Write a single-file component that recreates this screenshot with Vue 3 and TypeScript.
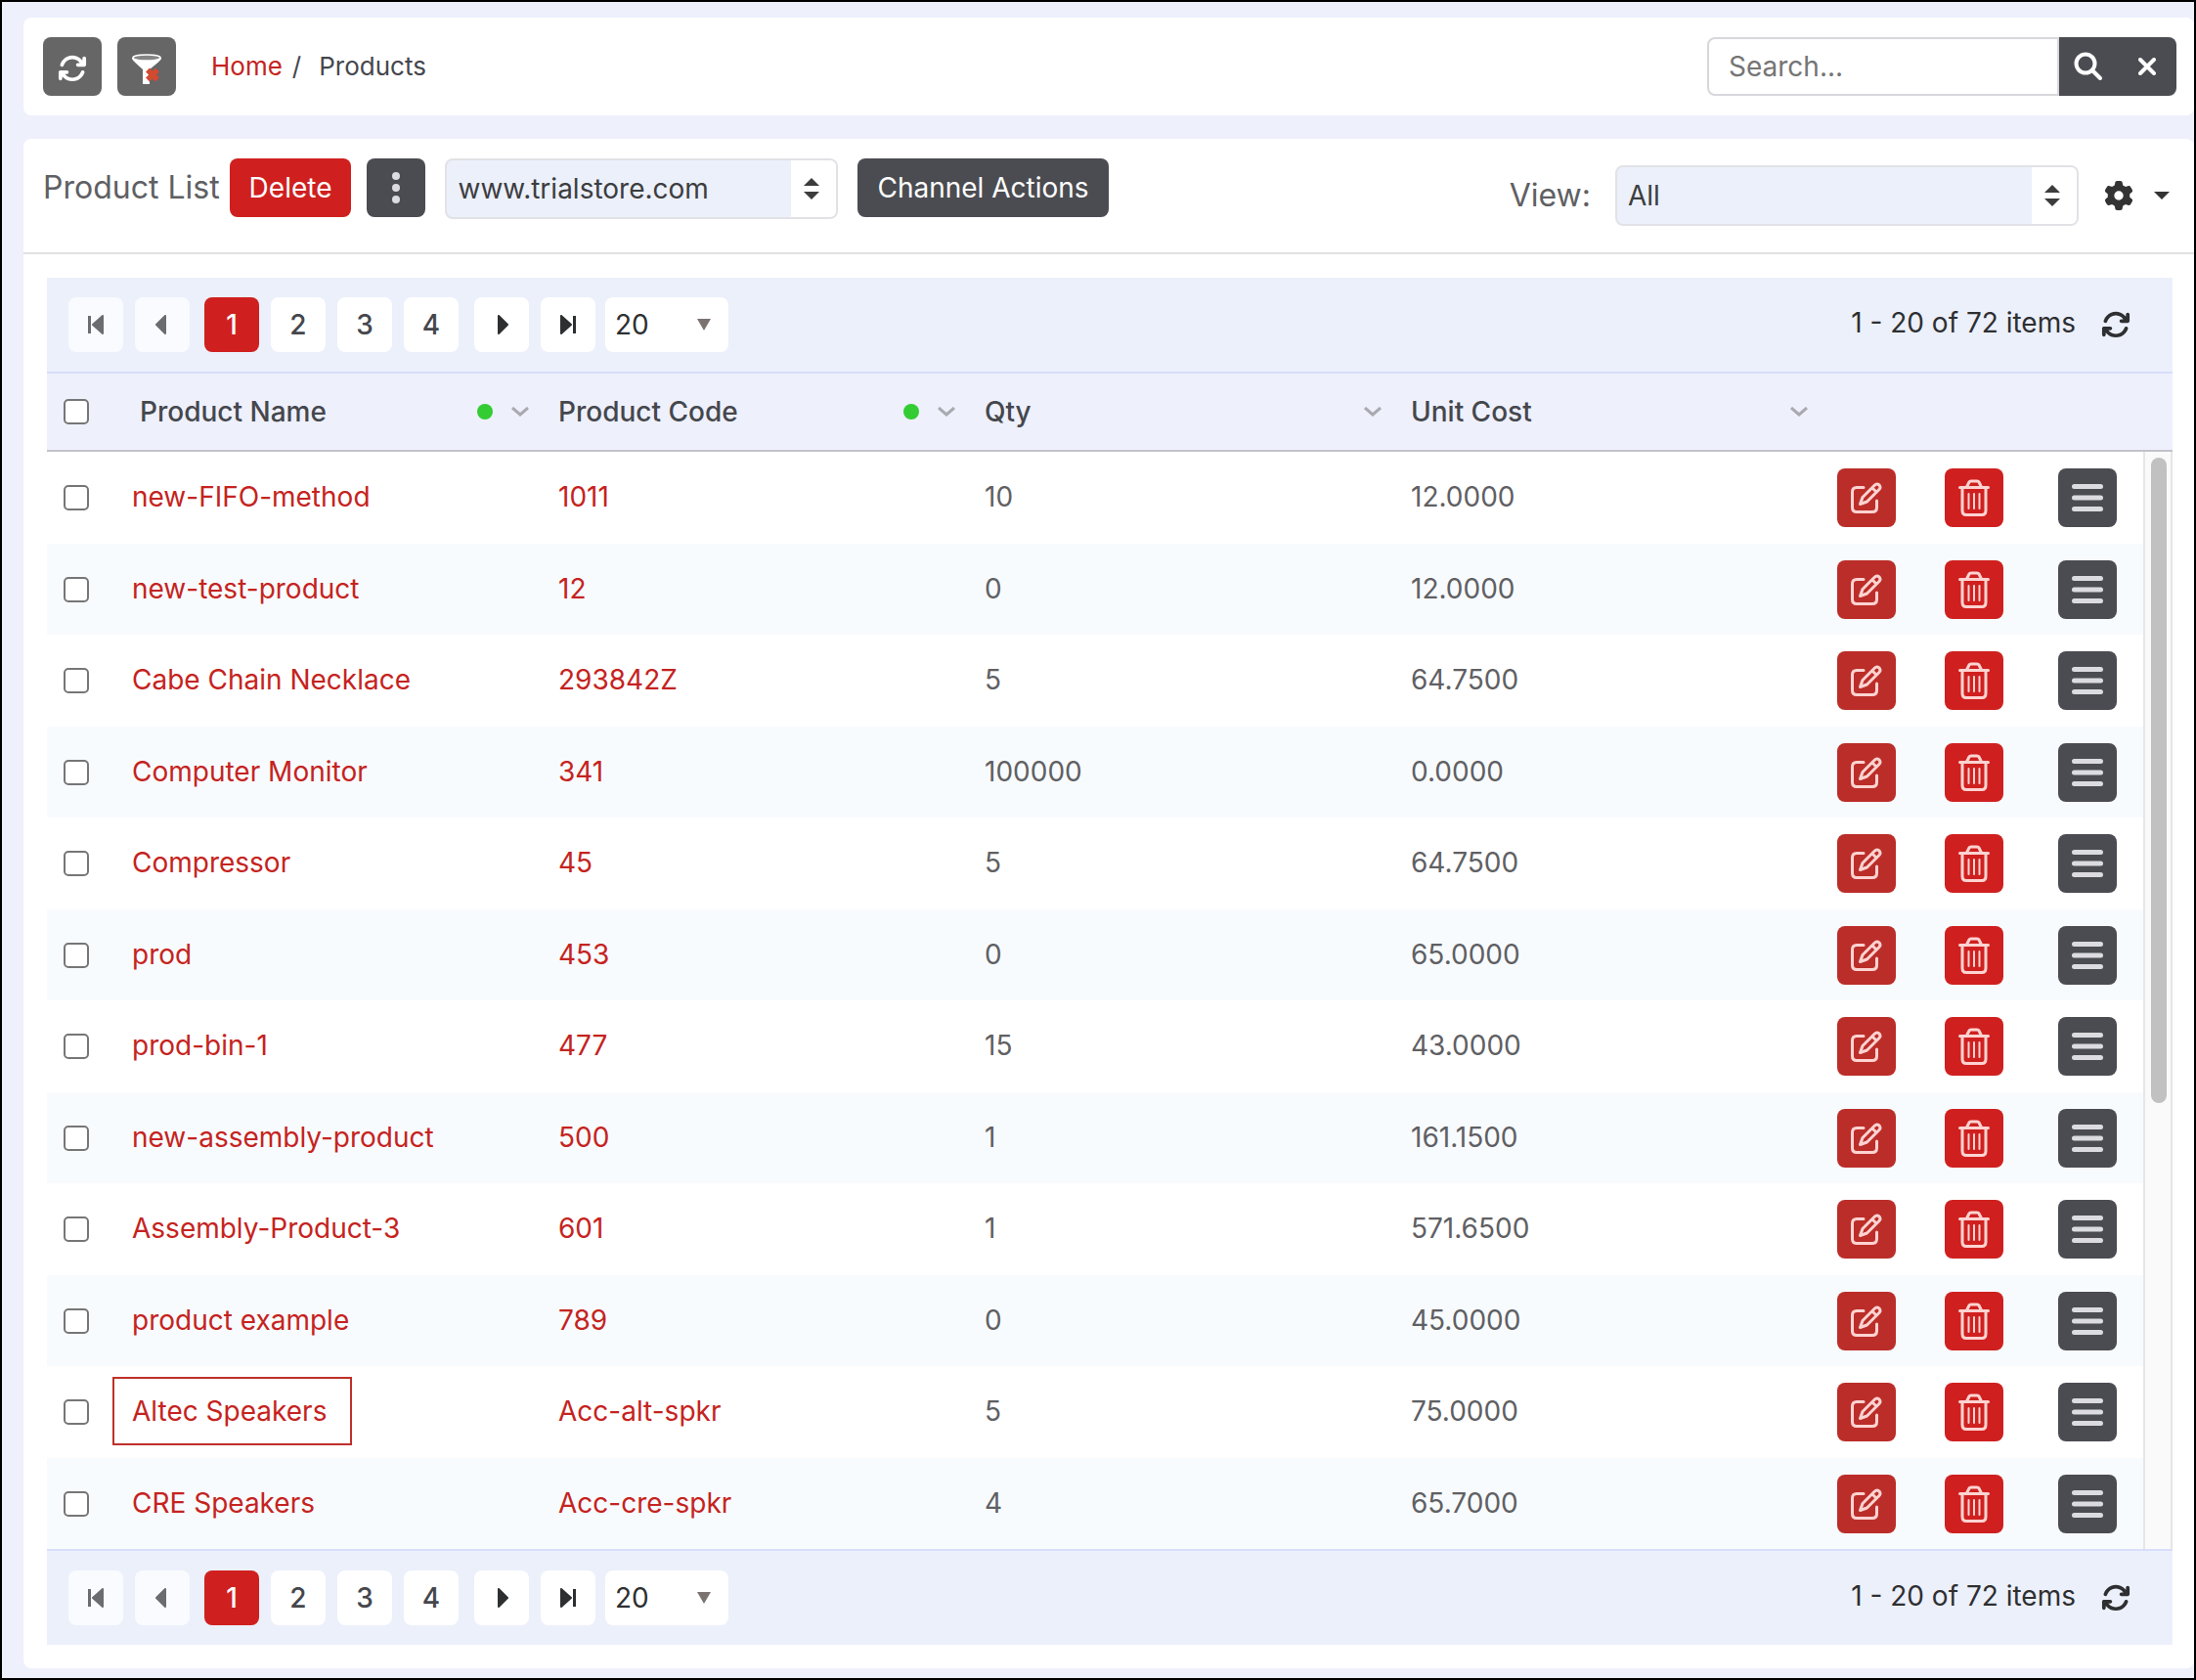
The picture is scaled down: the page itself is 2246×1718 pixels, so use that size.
<script setup lang="ts">
import { ref } from 'vue'

interface Product {
  name: string
  code: string
  qty: string
  cost: string
  marked?: boolean
}

interface Column {
  key: string
  label: string
  sorted: boolean
}

const columns: Column[] = [
  { key: 'name', label: 'Product Name', sorted: true },
  { key: 'code', label: 'Product Code', sorted: true },
  { key: 'qty', label: 'Qty', sorted: false },
  { key: 'cost', label: 'Unit Cost', sorted: false },
]

const products: Product[] = [
  { name: 'new-FIFO-method', code: '1011', qty: '10', cost: '12.0000' },
  { name: 'new-test-product', code: '12', qty: '0', cost: '12.0000' },
  { name: 'Cabe Chain Necklace', code: '293842Z', qty: '5', cost: '64.7500' },
  { name: 'Computer Monitor', code: '341', qty: '100000', cost: '0.0000' },
  { name: 'Compressor', code: '45', qty: '5', cost: '64.7500' },
  { name: 'prod', code: '453', qty: '0', cost: '65.0000' },
  { name: 'prod-bin-1', code: '477', qty: '15', cost: '43.0000' },
  { name: 'new-assembly-product', code: '500', qty: '1', cost: '161.1500' },
  { name: 'Assembly-Product-3', code: '601', qty: '1', cost: '571.6500' },
  { name: 'product example', code: '789', qty: '0', cost: '45.0000' },
  { name: 'Altec Speakers', code: 'Acc-alt-spkr', qty: '5', cost: '75.0000', marked: true },
  { name: 'CRE Speakers', code: 'Acc-cre-spkr', qty: '4', cost: '65.7000' },
]

const pages = [1, 2, 3, 4]
const page = ref(1)
const pageSize = ref('20')
const search = ref('')
const channel = ref('www.trialstore.com')
const view = ref('All')

const rotatePath =
  'M105.1 202.6c7.7-21.8 20.2-42.3 37.8-59.8c62.5-62.5 163.8-62.5 226.3 0L386.3 160H352c-17.7 0-32 14.3-32 32s14.3 32 32 32H463.5h.4c17.7 0 32-14.3 32-32V80c0-17.7-14.3-32-32-32s-32 14.3-32 32v35.2L414.4 97.6c-87.5-87.5-229.3-87.5-316.8 0C73.2 122 55.6 150.7 44.8 181.4c-5.9 16.7 2.9 34.9 19.5 40.8s34.9-2.9 40.8-19.5zM39 289.3c-5 1.5-9.8 4.2-13.7 8.2c-4 4-6.7 8.8-8.1 14c-.3 1.2-.6 2.5-.8 3.8c-.3 1.7-.4 3.4-.4 5.1V432c0 17.7 14.3 32 32 32s32-14.3 32-32V396.9l17.6 17.5c87.5 87.4 229.3 87.4 316.7 0c24.4-24.4 42.1-53.1 52.9-83.7c5.9-16.7-2.9-34.9-19.5-40.8s-34.9 2.9-40.8 19.5c-7.7 21.8-20.2 42.3-37.8 59.8c-62.5 62.5-163.8 62.5-226.3 0l-.1-.1L125.6 352H160c17.7 0 32-14.3 32-32s-14.3-32-32-32H48.4c-1.6 0-3.2 .1-4.8 .3s-3.1 .5-4.6 1z'
const gearPath =
  'M495.9 166.6c3.2 8.7 .5 18.4-6.4 24.6l-43.3 39.4c1.1 8.3 1.7 16.8 1.7 25.4s-.6 17.1-1.7 25.4l43.3 39.4c6.9 6.2 9.6 15.9 6.4 24.6c-4.4 11.9-9.7 23.3-15.8 34.3l-4.7 8.1c-6.6 11-14 21.4-22.1 31.2c-5.9 7.2-15.7 9.6-24.5 6.8l-55.7-17.7c-13.4 10.3-28.2 18.9-44 25.4l-12.5 57.1c-2 9.1-9 16.3-18.2 17.8c-13.8 2.3-28 3.5-42.5 3.5s-28.7-1.2-42.5-3.5c-9.2-1.5-16.2-8.7-18.2-17.8l-12.5-57.1c-15.8-6.5-30.6-15.1-44-25.4L83.1 425.9c-8.8 2.8-18.6 .3-24.5-6.8c-8.1-9.8-15.5-20.2-22.1-31.2l-4.7-8.1c-6.1-11-11.4-22.4-15.8-34.3c-3.2-8.7-.5-18.4 6.4-24.6l43.3-39.4C64.6 273.1 64 264.6 64 256s.6-17.1 1.7-25.4L22.4 191.2c-6.9-6.2-9.6-15.9-6.4-24.6c4.4-11.9 9.7-23.3 15.8-34.3l4.7-8.1c6.6-11 14-21.4 22.1-31.2c5.9-7.2 15.7-9.6 24.5-6.8l55.7 17.7c13.4-10.3 28.2-18.9 44-25.4l12.5-57.1c2-9.1 9-16.3 18.2-17.8C227.3 1.2 241.5 0 256 0s28.7 1.2 42.5 3.5c9.2 1.5 16.2 8.7 18.2 17.8l12.5 57.1c15.8 6.5 30.6 15.1 44 25.4l55.7-17.7c8.8-2.8 18.6-.3 24.5 6.8c8.1 9.8 15.5 20.2 22.1 31.2l4.7 8.1c6.1 11 11.4 22.4 15.8 34.3zM256 336a80 80 0 1 0 0-160 80 80 0 1 0 0 160z'
</script>

<template>
  <div class="page">
    <header class="card topbar">
      <button class="btn square gray" type="button" aria-label="Refresh">
        <svg width="30" height="30" viewBox="0 0 512 512" fill="#fff"><path :d="rotatePath" /></svg>
      </button>
      <button class="btn square gray" type="button" aria-label="Clear filter">
        <svg width="32" height="36" viewBox="0 0 32 36">
          <path d="M1 7C1 9.500 3 10.500 12 19V34H19V19C29 10.500 31 9.500 31 7Z" fill="#fff" />
          <ellipse cx="16" cy="7" rx="14" ry="3" fill="#858585" stroke="#fff" stroke-width="1.500" />
          <path d="M17 19.500L27 29.500M27 19.500L17 29.500" stroke="#d24a30" stroke-width="5.500" />
        </svg>
      </button>
      <nav class="crumbs" aria-label="Breadcrumb">
        <a href="#">Home</a><span>/</span><span>Products</span>
      </nav>
      <form class="search" @submit.prevent>
        <input v-model="search" type="text" placeholder="Search..." aria-label="Search" />
        <button type="submit" aria-label="Run search">
          <svg width="30" height="30" viewBox="0 0 30 30" fill="none" stroke="#fff" stroke-width="4" stroke-linecap="round">
            <circle cx="12" cy="12" r="9.500" />
            <path d="M19 19L27 27" />
          </svg>
        </button>
        <button class="last" type="button" aria-label="Clear search">
          <svg width="18" height="18" viewBox="0 0 18 18" fill="none" stroke="#fff" stroke-width="4" stroke-linecap="round">
            <path d="M2 2L16 16M16 2L2 16" />
          </svg>
        </button>
      </form>
    </header>

    <main class="card">
      <div class="toolbar">
        <div class="tools">
          <h1>Product List</h1>
          <button class="btn red" type="button">Delete</button>
          <button class="btn square dark" type="button" aria-label="More actions">
            <svg width="8" height="32" viewBox="0 0 8 32" fill="#dcdce0">
              <circle cx="4" cy="4" r="4" /><circle cx="4" cy="16" r="4" /><circle cx="4" cy="28" r="4" />
            </svg>
          </button>
          <div class="picker channel">
            <select v-model="channel" aria-label="Channel">
              <option>www.trialstore.com</option>
            </select>
            <span class="spin">
              <svg width="16" height="22" viewBox="0 0 16 22" fill="#3c3c3c"><path d="M0 8L8 0L16 8ZM0 14L8 22L16 14Z" /></svg>
            </span>
          </div>
          <button class="btn dark" type="button">Channel Actions</button>
        </div>
        <div class="viewer">
          <label for="view">View:</label>
          <div class="picker view">
            <select id="view" v-model="view">
              <option>All</option>
            </select>
            <span class="spin">
              <svg width="16" height="22" viewBox="0 0 16 22" fill="#3c3c3c"><path d="M0 8L8 0L16 8ZM0 14L8 22L16 14Z" /></svg>
            </span>
          </div>
          <button class="settings" type="button" aria-label="Settings">
            <svg width="30" height="30" viewBox="0 0 512 512" fill="#333"><path :d="gearPath" /></svg>
            <svg width="16" height="8" viewBox="0 0 16 8" fill="#333"><path d="M0 0H16L8 8Z" /></svg>
          </button>
        </div>
      </div>

      <div class="panel">
        <section class="grid">
          <template v-for="place in ['top', 'bottom']" :key="place">
            <div class="pager" :class="place">
              <button class="key off" type="button" aria-label="First page">
                <svg width="16" height="20" viewBox="0 0 16 20"><path d="M0 1H3V19H0Z" stroke="none" /><path d="M15 1V19L5 10Z" stroke-width="2" stroke-linejoin="round" /></svg>
              </button>
              <button class="key off" type="button" aria-label="Previous page">
                <svg width="16" height="20" viewBox="0 0 16 20"><path d="M11 1V19L2 10Z" stroke-width="2" stroke-linejoin="round" /></svg>
              </button>
              <div class="pages">
                <button
                  v-for="n in pages"
                  :key="n"
                  class="key"
                  :class="{ current: n === page }"
                  type="button"
                  @click="page = n"
                >{{ n }}</button>
              </div>
              <button class="key" type="button" aria-label="Next page">
                <svg width="16" height="20" viewBox="0 0 16 20"><path d="M5 1V19L14 10Z" stroke-width="2" stroke-linejoin="round" /></svg>
              </button>
              <button class="key" type="button" aria-label="Last page">
                <svg width="16" height="20" viewBox="0 0 16 20"><path d="M13 1H16V19H13Z" stroke="none" /><path d="M1 1V19L11 10Z" stroke-width="2" stroke-linejoin="round" /></svg>
              </button>
              <div class="size">
                <select v-model="pageSize" aria-label="Items per page">
                  <option>20</option>
                </select>
                <svg width="14" height="12" viewBox="0 0 14 12" fill="#7b7370"><path d="M0 0H14L7 12Z" /></svg>
              </div>
              <span class="count">1 - 20 of 72 items</span>
              <button class="reload" type="button" aria-label="Reload items">
                <svg width="30" height="30" viewBox="0 0 512 512" fill="#2e2f31"><path :d="rotatePath" /></svg>
              </button>
            </div>

            <template v-if="place === 'top'">
              <div class="head">
                <table>
                  <colgroup>
                    <col class="c-check" /><col /><col /><col /><col /><col class="c-edit" /><col class="c-trash" /><col class="c-menu" />
                  </colgroup>
                  <thead>
                    <tr>
                      <th class="check"><input type="checkbox" aria-label="Select all" /></th>
                      <th v-for="c in columns" :key="c.key" :class="c.key">
                        <div class="title">
                          <span>{{ c.label }}</span>
                          <i v-if="c.sorted" class="dot"></i>
                          <svg width="18" height="10" viewBox="0 0 18 10" fill="none" stroke="#a9a9b0" stroke-width="3"><path d="M1 1L9 8L17 1" /></svg>
                        </div>
                      </th>
                      <th></th><th></th><th></th>
                    </tr>
                  </thead>
                </table>
              </div>
              <div class="body">
                <table>
                  <colgroup>
                    <col class="c-check" /><col /><col /><col /><col /><col class="c-edit" /><col class="c-trash" /><col class="c-menu" />
                  </colgroup>
                  <tbody>
                    <tr v-for="p in products" :key="p.code">
                      <td class="check"><input type="checkbox" :aria-label="`Select ${p.name}`" /></td>
                      <td class="text"><a href="#" :class="{ marked: p.marked }">{{ p.name }}</a></td>
                      <td class="text"><a href="#">{{ p.code }}</a></td>
                      <td class="text">{{ p.qty }}</td>
                      <td class="text">{{ p.cost }}</td>
                      <td>
                        <button class="btn square brick" type="button" aria-label="Edit">
                          <svg width="32" height="32" viewBox="0 0 32 32" fill="none" stroke="#fdd3d1" stroke-width="3" stroke-linecap="round" stroke-linejoin="round">
                            <path d="M13 5.500H6Q1.500 5.500 1.500 10V26Q1.500 30.500 6 30.500H22Q26.500 30.500 26.500 26V19" />
                            <path d="M9.500 22.500L12 15.500L24.500 3Q26.500 1 29 3Q31 5.500 29 7.500L16.500 20ZM22 6L26 10" />
                          </svg>
                        </button>
                      </td>
                      <td>
                        <button class="btn square red" type="button" aria-label="Delete product">
                          <svg width="32" height="38" viewBox="0 0 32 38" fill="none" stroke="#fdd3d1" stroke-width="3" stroke-linecap="round" stroke-linejoin="round">
                            <path d="M1.500 8.500H30.500M8.500 8L11 3Q11.500 2 13 2H19Q20.500 2 21 3L23.500 8M4 9V32Q4 36.500 8 36.500H24Q28 36.500 28 32V9" />
                            <path d="M10.500 15V30M16 15V30M21.500 15V30" stroke-width="2" />
                          </svg>
                        </button>
                      </td>
                      <td>
                        <button class="btn square dark" type="button" aria-label="Product menu">
                          <svg width="32" height="28" viewBox="0 0 32 28" stroke="#dcdce0" stroke-width="5" stroke-linecap="round">
                            <path d="M2.500 2.500H29.500M2.500 14H29.500M2.500 25.500H29.500" />
                          </svg>
                        </button>
                      </td>
                    </tr>
                  </tbody>
                </table>
                <div class="track"><div class="thumb"></div></div>
              </div>
            </template>
          </template>
        </section>
      </div>
    </main>
  </div>
</template>

<style>
body {
  background: #eef0fc;
}
</style>

<style scoped>
.page,
.page * {
  box-sizing: border-box;
}

.page {
  min-height: 100vh;
  padding: 16px 0 10px 22px;
  border: 2px solid #000;
  background: #eef0fc;
  color: #5f6063;
  font-family: Inter, 'Liberation Sans', sans-serif;
  font-size: 28px;
  line-height: 34px;
}

button,
input,
select {
  margin: 0;
  padding: 0;
  border: 0;
  background: none;
  font: inherit;
  color: inherit;
}

svg {
  display: block;
  flex: none;
}

a {
  color: #c52320;
  text-decoration: none;
}

.card {
  border-radius: 8px;
  background: #fff;
}

.btn {
  display: flex;
  align-items: center;
  justify-content: center;
  height: 60px;
  padding: 0 20px;
  border-radius: 8px;
  color: #fff;
  white-space: nowrap;
}

.square {
  width: 60px;
  padding: 0;
}

.gray {
  padding-top: 4px;
  background: #666;
}

.dark { background: #4b4c51; }
.red { background: #cf201f; }
.brick { background: #bb2d29; }

.topbar {
  display: flex;
  align-items: center;
  gap: 16px;
  margin-bottom: 24px;
  padding: 20px 18px 20px 20px;
}

.crumbs {
  display: flex;
  gap: 10px;
  margin-left: 20px;
  color: #45474d;
  font-size: 26px;
}

.crumbs span:last-child {
  margin-left: 8px;
}

.search {
  display: flex;
  width: 480px;
  height: 60px;
  margin-left: auto;
}

.search input {
  flex: 1;
  min-width: 0;
  padding: 0 20px;
  border: 2px solid #d8d8dc;
  border-radius: 8px 0 0 8px;
}

.search input::placeholder {
  color: #757575;
}

.search button {
  display: grid;
  place-items: center;
  width: 60px;
  background: #4b4c51;
}

.search .last {
  border-radius: 0 8px 8px 0;
}

.toolbar {
  display: flex;
  align-items: center;
  justify-content: space-between;
  height: 118px;
  padding: 0 20px;
  border-bottom: 2px solid #e2e2e4;
}

.tools {
  display: flex;
  align-self: flex-start;
  align-items: flex-start;
  padding-top: 20px;
}

h1 {
  margin: 0 10px 0 0;
  font-size: 32px;
  font-weight: 400;
  line-height: 60px;
}

.tools .square {
  margin: 0 20px 0 16px;
}

.picker {
  position: relative;
  height: 62px;
  border: 2px solid #e2e2e6;
  border-radius: 8px;
  background: #ecf0fb;
}

.picker select,
.size select {
  width: 100%;
  height: 100%;
  appearance: none;
}

.picker select {
  padding-left: 11px;
  color: #3c3d40;
}

.channel {
  width: 402px;
  margin-right: 20px;
}

.view {
  width: 474px;
  margin: 0 26px 0 25px;
}

.spin {
  position: absolute;
  top: 0;
  right: 0;
  display: grid;
  place-items: center;
  width: 46px;
  height: 100%;
  padding-right: 4px;
  border-radius: 0 6px 6px 0;
  background: #fff;
  pointer-events: none;
}

.viewer {
  display: flex;
  align-items: center;
}

.viewer label {
  font-size: 32px;
}

.settings {
  display: flex;
  align-items: center;
  gap: 21px;
  margin-right: 5px;
}

.panel {
  padding: 24px 22px 24px 24px;
}

.pager {
  display: flex;
  align-items: center;
  gap: 10px;
  height: 98px;
  padding: 0 43px 0 22px;
  background: #ecf0fb;
  color: #2e2f31;
}

.top { border-bottom: 2px solid #d8defa; }
.bottom { border-top: 2px solid #d8defa; }

.key {
  display: grid;
  place-items: center;
  width: 56px;
  height: 56px;
  border-radius: 8px;
  background: #fff;
  color: #45474d;
  font-weight: 500;
}

.key + .key {
  margin-left: 2px;
}

.key svg {
  fill: #2e2f31;
  stroke: #2e2f31;
}

.off { background: #fafbfe; }

.off svg {
  fill: #6b6c70;
  stroke: #6b6c70;
}

.current {
  background: #cf201f;
  color: #fff;
}

.pages {
  display: flex;
  gap: 10px;
  margin: 0 6px 0 5px;
}

.size {
  position: relative;
  width: 126px;
  height: 56px;
}

.size select {
  padding-left: 10px;
  border-radius: 8px;
  background: #fff;
  color: #2e2f31;
}

.size svg {
  position: absolute;
  top: 22px;
  right: 18px;
  pointer-events: none;
}

.count {
  margin-left: auto;
  padding-bottom: 4px;
}

.reload {
  margin-left: 16px;
}

.head {
  padding-right: 30px;
  border-bottom: 2px solid #c2c3ca;
  background: #eef0fc;
}

table {
  width: 100%;
  border-collapse: collapse;
  table-layout: fixed;
}

.c-check { width: 65px; }
.c-edit { width: 110px; }
.c-trash { width: 116px; }
.c-menu { width: 109px; }

th,
td {
  padding: 0 8px 0 22px;
  text-align: left;
  vertical-align: middle;
}

th {
  height: 78px;
  color: #45474d;
  font-weight: 500;
}

.name {
  padding-left: 30px;
}

.title {
  display: flex;
  align-items: center;
  gap: 19px;
}

.title span {
  flex: 1;
}

.dot {
  width: 16px;
  height: 16px;
  border-radius: 50%;
  background: #33cc33;
}

.body {
  display: flex;
}

td {
  height: 94px;
}

tr:nth-child(even) td {
  height: 93px;
  background: #f8fbfe;
}

.text {
  padding-bottom: 2px;
}

.check {
  padding: 0 0 0 17px;
}

.check input {
  display: block;
  width: 26px;
  height: 26px;
  border: 2px solid #767676;
  border-radius: 5px;
  background: #fff;
  appearance: none;
}

.marked {
  display: inline-block;
  margin-left: -20px;
  padding: 16px 24px 16px 18px;
  border: 2px solid #c0302a;
}

.track {
  flex: none;
  width: 30px;
  padding: 6px 4px 0 6px;
  border: solid #e6e6e8;
  border-width: 0 2px;
  background: #fafafa;
}

.thumb {
  width: 16px;
  height: 660px;
  border-radius: 8px;
  background: #c1c1c1;
}
</style>
